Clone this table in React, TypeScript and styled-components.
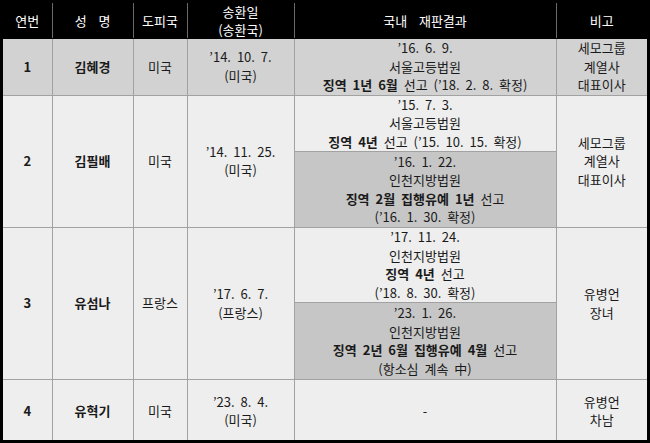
import React from 'react';
import styled, { createGlobalStyle } from 'styled-components';

const GlobalStyle = createGlobalStyle`
  html, body {
    margin: 0;
    padding: 0;
    background: #ffffff;
  }
  body {
    font-family: "Noto Sans CJK KR", "Noto Sans", sans-serif;
    color: #1a1a1a;
  }
`;

const Frame = styled.div`
  box-sizing: border-box;
  width: 650px;
  height: 443px;
  border: 3px solid #000;
  overflow: hidden;
  background: #eeeeee;
`;

const Table = styled.table`
  width: 644px;
  table-layout: fixed;
  border-collapse: collapse;
  border-style: hidden;
  font-size: 13px;
  line-height: 18.5px;
  word-spacing: 3px;
`;

const HeadCell = styled.th`
  background: #000;
  color: #fff;
  font-weight: normal;
  font-size: 13px;
  line-height: 17.5px;
  padding: 0;
  text-align: center;
  vertical-align: middle;
  border-left: 1px solid #6a6a6a;
  border-bottom: 1px solid #000;
`;

const Cell = styled.td<{ $tone?: 'light' | 'mid' | 'dark'; $bold?: boolean }>`
  padding: 0;
  text-align: center;
  vertical-align: middle;
  border: 1px solid #a2a2a2;
  font-weight: ${({ $bold }) => ($bold ? 700 : 400)};
  background: ${({ $tone }) =>
    $tone === 'mid' ? '#d2d2d2' : $tone === 'dark' ? '#c6c6c6' : '#eeeeee'};
`;

const Row = styled.tr<{ $h: number }>`
  height: ${({ $h }) => $h}px;
`;

const B = styled.b`
  font-weight: 700;
`;

export default function App() {
  return (
    <>
      <GlobalStyle />
      <Frame>
        <Table>
          <colgroup>
            <col style={{ width: 49 }} />
            <col style={{ width: 81 }} />
            <col style={{ width: 54 }} />
            <col style={{ width: 107 }} />
            <col style={{ width: 262 }} />
            <col style={{ width: 91 }} />
          </colgroup>
          <thead>
            <Row $h={35}>
              <HeadCell>연번</HeadCell>
              <HeadCell>성&nbsp;&nbsp;명</HeadCell>
              <HeadCell>도피국</HeadCell>
              <HeadCell>
                송환일
                <br />
                (송환국)
              </HeadCell>
              <HeadCell>국내&nbsp;&nbsp;재판결과</HeadCell>
              <HeadCell>비고</HeadCell>
            </Row>
          </thead>
          <tbody>
            <Row $h={55}>
              <Cell $tone="mid" $bold>1</Cell>
              <Cell $tone="mid" $bold>김혜경</Cell>
              <Cell $tone="mid">미국</Cell>
              <Cell $tone="mid">
                ’14. 10. 7.
                <br />
                (미국)
              </Cell>
              <Cell $tone="mid">
                ’16. 6. 9.
                <br />
                서울고등법원
                <br />
                <B>징역 1년 6월</B> 선고 (’18. 2. 8. 확정)
              </Cell>
              <Cell $tone="mid">
                세모그룹
                <br />
                계열사
                <br />
                대표이사
              </Cell>
            </Row>
            <Row $h={56}>
              <Cell rowSpan={2} $bold>2</Cell>
              <Cell rowSpan={2} $bold>김필배</Cell>
              <Cell rowSpan={2}>미국</Cell>
              <Cell rowSpan={2}>
                ’14. 11. 25.
                <br />
                (미국)
              </Cell>
              <Cell>
                ’15. 7. 3.
                <br />
                서울고등법원
                <br />
                <B>징역 4년</B> 선고 (’15. 10. 15. 확정)
              </Cell>
              <Cell rowSpan={2}>
                세모그룹
                <br />
                계열사
                <br />
                대표이사
              </Cell>
            </Row>
            <Row $h={76}>
              <Cell $tone="dark">
                ’16. 1. 22.
                <br />
                인천지방법원
                <br />
                <B>징역 2월 집행유예 1년</B> 선고
                <br />
                (’16. 1. 30. 확정)
              </Cell>
            </Row>
            <Row $h={75}>
              <Cell rowSpan={2} $bold>3</Cell>
              <Cell rowSpan={2} $bold>유섬나</Cell>
              <Cell rowSpan={2}>프랑스</Cell>
              <Cell rowSpan={2}>
                ’17. 6. 7.
                <br />
                (프랑스)
              </Cell>
              <Cell>
                ’17. 11. 24.
                <br />
                인천지방법원
                <br />
                <B>징역 4년</B> 선고
                <br />
                (’18. 8. 30. 확정)
              </Cell>
              <Cell rowSpan={2}>
                유병언
                <br />
                장녀
              </Cell>
            </Row>
            <Row $h={77}>
              <Cell $tone="dark">
                ’23. 1. 26.
                <br />
                인천지방법원
                <br />
                <B>징역 2년 6월 집행유예 4월</B> 선고
                <br />
                (항소심 계속 中)
              </Cell>
            </Row>
            <Row $h={63}>
              <Cell $bold>4</Cell>
              <Cell $bold>유혁기</Cell>
              <Cell>미국</Cell>
              <Cell>
                ’23. 8. 4.
                <br />
                (미국)
              </Cell>
              <Cell>-</Cell>
              <Cell>
                유병언
                <br />
                차남
              </Cell>
            </Row>
          </tbody>
        </Table>
      </Frame>
    </>
  );
}
